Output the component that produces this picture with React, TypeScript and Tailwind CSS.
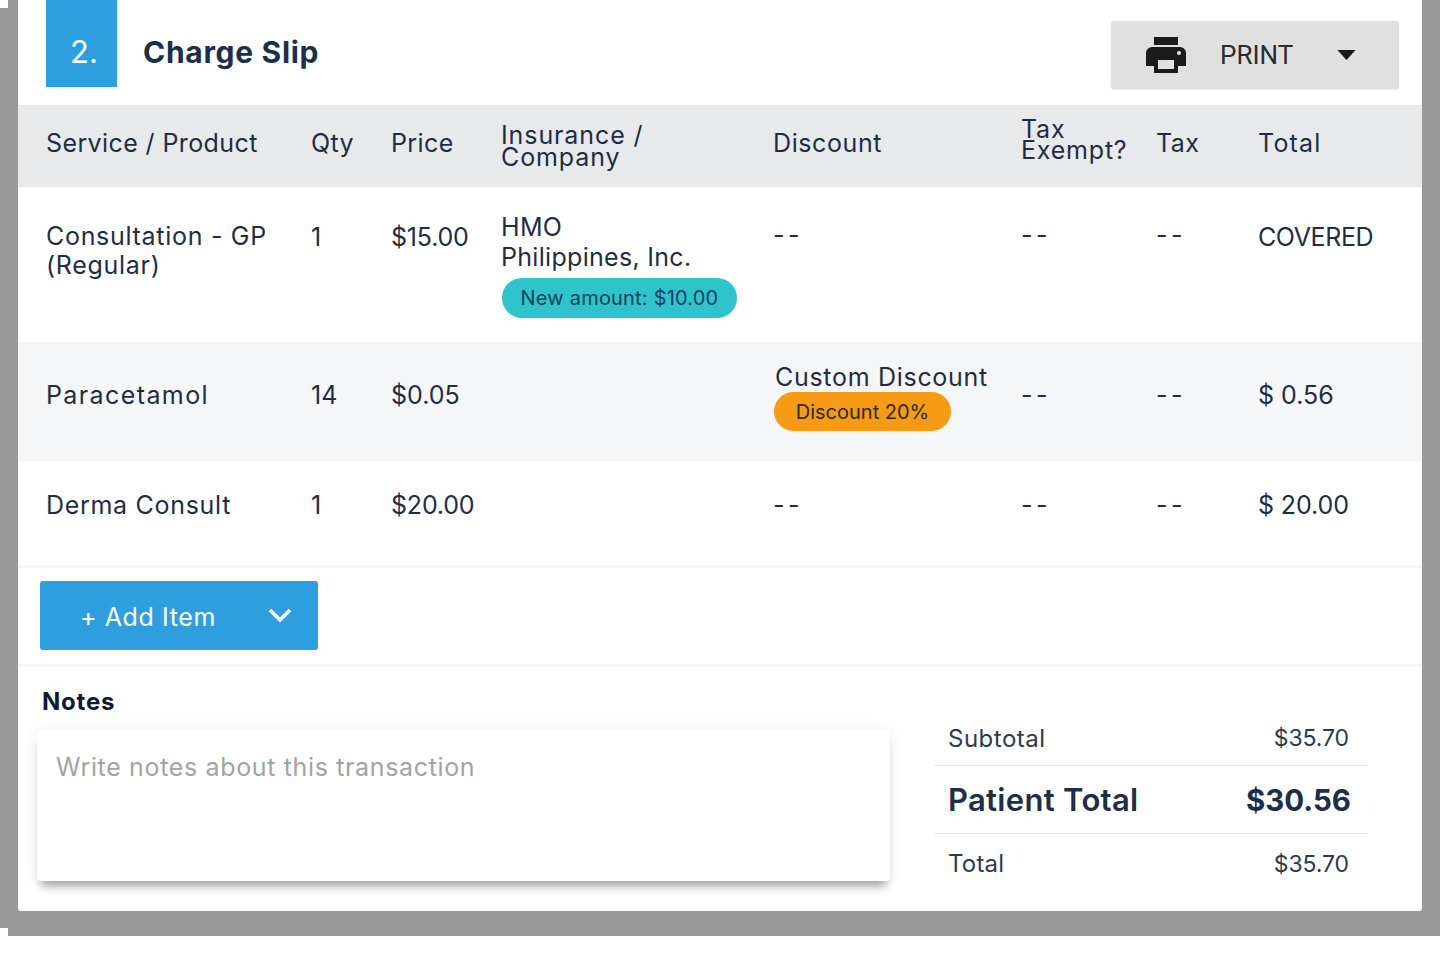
const gridCols = 'grid grid-cols-[265px_80px_110px_272px_248px_135px_102px_1fr] pl-[28px]'
const font = 'font-["Inter",sans-serif]'

function PrinterIcon() {
  return (
    <svg width="40" height="36" viewBox="0 0 40 36" className="text-[#1a1a1a]" fill="currentColor">
      <path d="M8 0h24v8H8z" />
      <path fillRule="evenodd" d="M6 10h28a6 6 0 0 1 6 6v13h-8v7H8v-7H0V16a6 6 0 0 1 6-6zm6 13v9h16v-9zm21-9a2 2 0 1 0 0 4 2 2 0 0 0 0-4z" />
    </svg>
  )
}

function Dash() {
  return <span className="tracking-[3.5px]">--</span>
}

export default function App() {
  return (
    <div className={`flex h-[974px] bg-white text-[#1f2d44] ${font}`}>
      <div className="w-2 h-[920px] mt-2 bg-[#999999]"></div>
      <div className="w-[1432px] h-[936px] bg-[#999999] pl-[10px] pr-[18px] pb-[25px]">
        <div className="h-[911px] bg-white rounded-b-[3px] flex flex-col">
          {/* judul */}
          <div className="h-[105px] flex justify-between pl-[28px] pr-[23px]">
            <div className="flex items-start">
              <div className="w-[71px] h-[87px] bg-[#2f9ede] flex items-center justify-center pl-[5px] pt-[18px] text-white text-[31px]">2.</div>
              <h1 className="ml-[26px] mt-[31px] text-[30px] leading-[42px] font-bold tracking-[0.7px] text-[#1c2e4a]">Charge Slip</h1>
            </div>
            <button className="mt-[21px] w-[288px] h-[68px] bg-[#e0e0e0] rounded-[3px] flex items-center pl-[35px] shadow-[0_1px_2px_rgba(0,0,0,0.08)]">
              <PrinterIcon />
              <span className='ml-[34px] font-["Roboto",sans-serif] text-[26px] text-[#2b2b2b]'>PRINT</span>
              <svg width="19" height="10" viewBox="0 0 20 11" className="ml-[44px]"><path d="M0 0h20L10 11z" fill="#1a1a1a" /></svg>
            </button>
          </div>

          {/* header tabel */}
          <div className={`${gridCols} h-[82px] bg-[#e8e9ea] items-center text-[25px] leading-[22px] tracking-[0.4px]`}>
            <div className="pb-[6px]">Service / Product</div>
            <div className="pb-[6px]">Qty</div>
            <div className="pb-[6px]">Price</div>
            <div className="tracking-[0.9px]">Insurance /<br />Company</div>
            <div className="pb-[6px] tracking-[0.6px]">Discount</div>
            <div className="pb-[13px] tracking-[0.8px] leading-[21px]">Tax<br />Exempt?</div>
            <div className="pb-[6px]">Tax</div>
            <div className="pb-[6px] tracking-[1.2px]">Total</div>
          </div>

          {/* baris 1 */}
          <div className={`${gridCols} h-[155px] bg-white pt-[25px] text-[25px] leading-[30px] tracking-[0.7px]`}>
            <div className="pt-[10px] leading-[29px]">Consultation - GP<br />(Regular)</div>
            <div className="pt-[10px]">1</div>
            <div className="pt-[10px] tracking-[-0.2px]">$15.00</div>
            <div>
              <div className="tracking-[0.3px]">HMO<br />Philippines, Inc.</div>
              <div className="mt-[6px] ml-[1px] w-[235px] h-[40px] rounded-full bg-[#2fc4cb] flex items-center justify-center text-[20px] tracking-[0.2px] text-[#123e5c]">New amount: $10.00</div>
            </div>
            <div className="pt-[8px]"><Dash /></div>
            <div className="pt-[8px]"><Dash /></div>
            <div className="pt-[8px]"><Dash /></div>
            <div className="pt-[10px] tracking-[-0.4px]">COVERED</div>
          </div>

          {/* baris 2 */}
          <div className={`${gridCols} h-[119px] bg-[#f5f6f7] items-center text-[25px] leading-[30px] tracking-[1.4px]`}>
            <div className="pb-[14px]">Paracetamol</div>
            <div className="pb-[14px] tracking-[0px]">14</div>
            <div className="pb-[14px] tracking-[0px]">$0.05</div>
            <div></div>
            <div className="pb-[10px]">
              <div className="ml-[2px] whitespace-nowrap tracking-[0.7px]">Custom Discount</div>
              <div className="ml-[1px] w-[177px] h-[39px] rounded-full bg-[#f59c14] flex items-center justify-center text-[20px] tracking-[0px] text-[#2a2a30]">Discount 20%</div>
            </div>
            <div className="pb-[14px]"><Dash /></div>
            <div className="pb-[14px]"><Dash /></div>
            <div className="pb-[14px] tracking-[0px]">$ 0.56</div>
          </div>

          {/* baris 3 */}
          <div className={`${gridCols} h-[107px] bg-white items-center text-[25px] leading-[30px] tracking-[0.7px] border-b-[3px] border-[#f7f7f7]`}>
            <div className="pb-[16px]">Derma Consult</div>
            <div className="pb-[16px]">1</div>
            <div className="pb-[16px] tracking-[-0.2px]">$20.00</div>
            <div></div>
            <div className="pb-[16px]"><Dash /></div>
            <div className="pb-[16px]"><Dash /></div>
            <div className="pb-[16px]"><Dash /></div>
            <div className="pb-[16px] tracking-[-0.1px]">$ 20.00</div>
          </div>

          {/* tombol tambah */}
          <div className="h-[99px] border-b-[3px] border-[#f7f7f7] pl-[22px] pt-[13px]">
            <button className="w-[278px] h-[69px] rounded-[3px] bg-[#2f9ede] text-white flex items-center pl-[40px] pt-[4px] text-[25px] tracking-[0.6px]">
              <span>+ Add Item</span>
              <svg width="24" height="15" viewBox="0 0 24 15" fill="none" stroke="currentColor" strokeWidth="3.6" className="ml-[52px] -mt-[4px]">
                <path d="M2 2l10 10L22 2" />
              </svg>
            </button>
          </div>

          {/* catatan dan total */}
          <div className="flex-1 flex pl-[19px]">
            <div className="w-[853px]">
              <div className="ml-[5px] mt-[19px] text-[24px] leading-[32px] font-bold tracking-[0.8px] text-[#0e1a2e]">Notes</div>
              <textarea
                readOnly
                placeholder="Write notes about this transaction"
                className="block mt-[12px] w-[853px] h-[151px] resize-none rounded-[4px] bg-white px-[19px] py-[19px] text-[25px] leading-[36px] tracking-[0.65px] outline-none placeholder:text-[#a3a3a3] shadow-[0_0_16px_rgba(0,0,0,0.06),0_9px_9px_-4px_rgba(0,0,0,0.35)]"
              />
            </div>
            <div className="w-[434px] ml-[44px] mt-[48px] text-[#2c3a4d]">
              <div className="h-[51px] pb-[3px] border-b border-[#e6e6e6] flex items-center justify-between px-[14px] pr-[19px] text-[24px]">
                <span className="tracking-[0.5px]">Subtotal</span><span className="text-[23px] tracking-[-0.1px]">$35.70</span>
              </div>
              <div className="h-[68px] pt-[2px] border-b border-[#e6e6e6] flex items-center justify-between px-[14px] pr-[17px] text-[31px] font-semibold tracking-[0.3px] text-[#1c2e4a]">
                <span>Patient Total</span><span className="font-bold text-[29.5px] tracking-[0px]">$30.56</span>
              </div>
              <div className="h-[60px] flex items-center justify-between px-[14px] pr-[19px] text-[24px]">
                <span className="tracking-[0.2px]">Total</span><span className="text-[23px] tracking-[-0.1px]">$35.70</span>
              </div>
            </div>
          </div>
        </div>
      </div>
    </div>
  )
}
